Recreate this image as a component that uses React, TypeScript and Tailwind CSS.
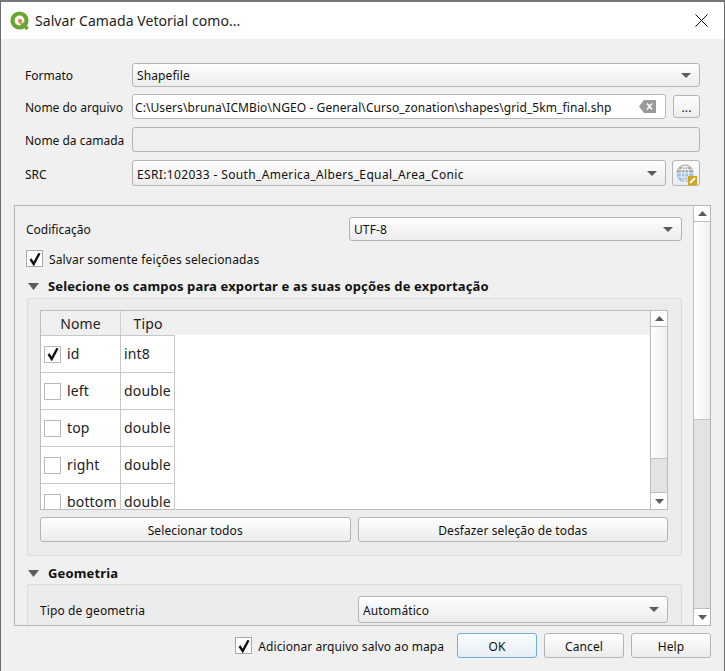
import type { ReactNode } from "react"

const FONT = "font-['Noto_Sans','Open_Sans',sans-serif]"
const RAISED = "border border-[#b4b4b4] rounded-[3px] bg-gradient-to-b from-[#fefefe] to-[#ececec]"

function Arrow({ up = false, w = 10, h = 5 }: { up?: boolean; w?: number; h?: number }) {
  return (
    <svg width={w} height={h} viewBox="0 0 12 7" preserveAspectRatio="none" className="block shrink-0">
      <polygon points={up ? "6,0 12,7 0,7" : "0,0 12,0 6,7"} fill="#5c5c5c" />
    </svg>
  )
}

function Combo({ text, className, textClass = "pt-[2px] tracking-[0.1px]" }: { text: string; className: string; textClass?: string }) {
  return (
    <div className={`flex items-center justify-between pl-[4px] pr-[8px] text-[12px] text-[#111] ${RAISED} ${className}`}>
      <span className={textClass}>{text}</span>
      <Arrow />
    </div>
  )
}

function Check({ on = false, border = "border-[#a8a8a8]" }: { on?: boolean; border?: string }) {
  return (
    <div className={`bg-white border ${border} flex items-center justify-center shrink-0 w-[17px] h-[17px]`}>
      {on && (
        <svg width="14" height="14" viewBox="0 0 14 14">
          <path d="M2.5 7 L5.7 12 L11.5 1.2" fill="none" stroke="#111" strokeWidth="2.4" />
        </svg>
      )}
    </div>
  )
}

function FormRow({ label, children, className, labelPad = "pt-[2px]" }: { label: string; children: ReactNode; className: string; labelPad?: string }) {
  return (
    <div className={`flex items-center ${className}`}>
      <div className={`w-[107px] shrink-0 text-[12px] text-[#111] ${labelPad}`}>{label}</div>
      {children}
    </div>
  )
}

function Scrollbar({ thumb, track }: { thumb: number; track: number }) {
  return (
    <div className="w-[17px] h-full shrink-0 flex flex-col border-l border-[#bdbdbd] bg-[#e3e3e3]">
      <div className="h-[16px] shrink-0 bg-white border-b border-[#bdbdbd] flex items-center justify-center">
        <Arrow up w={9} />
      </div>
      <div style={{ height: thumb }} className="shrink-0 bg-gradient-to-r from-white to-[#f0f0f0] border-b border-[#c4c4c4]" />
      <div style={{ height: track }} className="shrink-0" />
      <div className="h-[17px] shrink-0 bg-white border-t border-[#bdbdbd] flex items-center justify-center">
        <Arrow w={9} />
      </div>
    </div>
  )
}

function QgisIcon() {
  return (
    <svg width="20" height="20" viewBox="0 0 20 20" className="shrink-0">
      <circle cx="9.5" cy="9.5" r="7" fill="none" stroke="#6aa533" strokeWidth="4.2" />
      <path d="M11 11 L17.5 18" stroke="#6aa533" strokeWidth="3.5" />
      <path d="M8 7 L13 12" stroke="#f2e6c2" strokeWidth="2" />
      <circle cx="10" cy="10" r="2" fill="#e8833a" />
    </svg>
  )
}

function GlobeIcon() {
  return (
    <svg width="22" height="22" viewBox="0 0 22 22">
      <circle cx="10" cy="11" r="8.5" fill="#9cc0e4" />
      <path d="M1.5 10 A8.5 8.5 0 0 1 18.5 10 Z" fill="#a9a9a9" />
      <path d="M1.5 10 H18.5 M3 6.5 H17 M6 3.5 H14 M2.5 14 H17.5 M10 2.5 V19.5 M10 2.5 C5 6 5 16 10 19.5 M10 2.5 C15 6 15 16 10 19.5" fill="none" stroke="#ffffff" strokeWidth="0.8" />
      <rect x="13" y="13" width="9" height="9" fill="#cfa51b" />
      <path d="M15 20 L20 15" stroke="#ffffff" strokeWidth="2" />
    </svg>
  )
}

const FIELDS = [
  { name: "id", type: "int8", on: true },
  { name: "left", type: "double" },
  { name: "top", type: "double" },
  { name: "right", type: "double" },
  { name: "bottom", type: "double" },
]

function FieldTable() {
  return (
    <div className="h-[200px] flex border border-[#bdbdbd] bg-white overflow-hidden">
      <div className="flex-1 min-w-0 overflow-hidden text-[14px] text-[#222] tracking-[0.15px]">
        <div className="flex h-[24px] bg-[#efefef] text-center leading-[26px]">
          <div className="w-[80px] border-r border-[#cfcfcf]">Nome</div>
          <div className="w-[54px]">Tipo</div>
        </div>
        {FIELDS.map((f) => (
          <div key={f.name} className="flex h-[37px] first:h-[36px] w-[134px] border-t border-[#c8c8c8] first:border-t-0">
            <div className="w-[80px] flex items-center gap-[6px] pl-[3px] border-r border-[#c8c8c8]">
              <Check on={f.on} border="border-[#b8b8b8]" />
              <span className="pb-[2px]">{f.name}</span>
            </div>
            <div className="w-[54px] flex items-center pl-[3px] pb-[2px] border-r border-[#c8c8c8]">{f.type}</div>
          </div>
        ))}
      </div>
      <Scrollbar thumb={132} track={33} />
    </div>
  )
}

function Btn({ children, className }: { children: ReactNode; className: string }) {
  return (
    <div className={`flex items-center justify-center pt-[2px] text-[12px] tracking-[0.1px] text-[#111] ${RAISED} ${className}`}>{children}</div>
  )
}

function GroupHeader({ text, className }: { text: string; className: string }) {
  return (
    <div className={`flex items-center h-[16px] pl-[2px] ${className}`}>
      <Arrow w={11} h={7} />
      <span className="ml-[9px] pt-[2px] text-[13px] font-bold tracking-[0.14px] text-[#111] whitespace-nowrap">{text}</span>
    </div>
  )
}

export default function App() {
  return (
    <div className={`w-[725px] h-[671px] overflow-hidden bg-[#f0f0f0] border-l border-r border-[#6b6b6b] ${FONT}`}>
      <div className="h-[39px] flex items-center justify-between bg-white border-t-2 border-[#777777] pl-[9px] pr-[16px]">
        <div className="flex items-center gap-[5px]">
          <QgisIcon />
          <span className="text-[14px] tracking-[0.07px] text-[#222]">Salvar Camada Vetorial como...</span>
        </div>
        <svg width="13" height="13" viewBox="0 0 13 13">
          <path d="M0.5 0.5 L12.5 12.5 M12.5 0.5 L0.5 12.5" stroke="#111" strokeWidth="1" />
        </svg>
      </div>

      <div className="pl-[24px] pr-[24px]">
        <FormRow label="Formato" className="mt-[24px] h-[24px]">
          <Combo text="Shapefile" className="flex-1 h-full" />
        </FormRow>
        <FormRow label="Nome do arquivo" className="mt-[7px] h-[25px]">
          <div className="w-[534px] h-full flex items-center justify-between bg-white border border-[#b8b8b8] rounded-[3px] pl-[2px] pr-[9px] text-[12px] text-[#111]">
            <span className="pt-[2px] whitespace-nowrap tracking-[0.08px]">C:\Users\bruna\ICMBio\NGEO - General\Curso_zonation\shapes\grid_5km_final.shp</span>
            <svg width="17" height="13" viewBox="0 0 17 13" className="shrink-0">
              <path d="M0 6.5 L5 0 H17 V13 H5 Z" fill="#9a9a9a" />
              <path d="M8 3.5 L13 9.5 M13 3.5 L8 9.5" stroke="#fff" strokeWidth="1.6" />
            </svg>
          </div>
          <Btn className="ml-[7px] w-[27px] h-[23px]">...</Btn>
        </FormRow>
        <FormRow label="Nome da camada" className="mt-[8px] h-[25px]">
          <div className="flex-1 h-full bg-[#efefef] border border-[#b4b4b4] rounded-[3px]" />
        </FormRow>
        <FormRow label="SRC" labelPad="pt-[4px]" className="mt-[8px] h-[26px]">
          <Combo text="ESRI:102033 - South_America_Albers_Equal_Area_Conic" textClass="pt-[4px] tracking-[0.35px]" className="w-[534px] h-full" />
          <Btn className="ml-[6px] w-[28px] h-full"><GlobeIcon /></Btn>
        </FormRow>
      </div>

      <div className="mt-[19px] ml-[13px] mr-[13px] h-[421px] flex border border-[#b4b4b4] overflow-hidden">
        <div className="flex-1 min-w-0 pl-[11px] pr-[11px] overflow-hidden">
          <div className="mt-[11px] h-[24px] flex items-center justify-between">
            <span className="pt-[2px] text-[12px] text-[#111]">Codificação</span>
            <Combo text="UTF-8" className="w-[333px] h-full" />
          </div>
          <div className="mt-[9px] h-[17px] flex items-center gap-[6px]">
            <Check on />
            <span className="pt-[2px] text-[12px] tracking-[0.15px] text-[#111]">Salvar somente feições selecionadas</span>
          </div>
          <GroupHeader text="Selecione os campos para exportar e as suas opções de exportação" className="mt-[11px]" />
          <div className="mt-[4px] ml-[1px] h-[258px] border border-[#dcdcdc] rounded-[2px] bg-[#ececec] pl-[12px] pr-[13px] pt-[11px]">
            <FieldTable />
            <div className="mt-[7px] flex gap-[7px]">
              <Btn className="flex-1 h-[25px]">Selecionar todos</Btn>
              <Btn className="flex-1 h-[25px]">Desfazer seleção de todas</Btn>
            </div>
          </div>
          <GroupHeader text="Geometria" className="mt-[9px]" />
          <div className="mt-[3px] ml-[1px] h-[60px] border border-[#dcdcdc] rounded-[2px] bg-[#ececec] pl-[12px] pr-[13px] pt-[11px]">
            <div className="h-[27px] flex items-center justify-between">
              <span className="pt-[2px] text-[12px] tracking-[0.1px] text-[#111]">Tipo de geometria</span>
              <Combo text="Automático" className="w-[310px] h-full" />
            </div>
          </div>
        </div>
        <Scrollbar thumb={198} track={188} />
      </div>

      <div className="mt-[7px] mr-[13px] flex items-center justify-end">
        <Check on />
        <span className="ml-[6px] mr-[13px] pt-[2px] text-[12px] tracking-[0.07px] text-[#111]">Adicionar arquivo salvo ao mapa</span>
        <div className="w-[80px] h-[25px] flex items-center justify-center pt-[2px] text-[12px] text-[#111] border border-[#6aaee3] rounded-[3px] bg-gradient-to-b from-[#fafcfe] to-[#e6eef5]">OK</div>
        <Btn className="ml-[7px] w-[80px] h-[25px]">Cancel</Btn>
        <Btn className="ml-[7px] w-[80px] h-[25px]">Help</Btn>
      </div>
    </div>
  )
}
